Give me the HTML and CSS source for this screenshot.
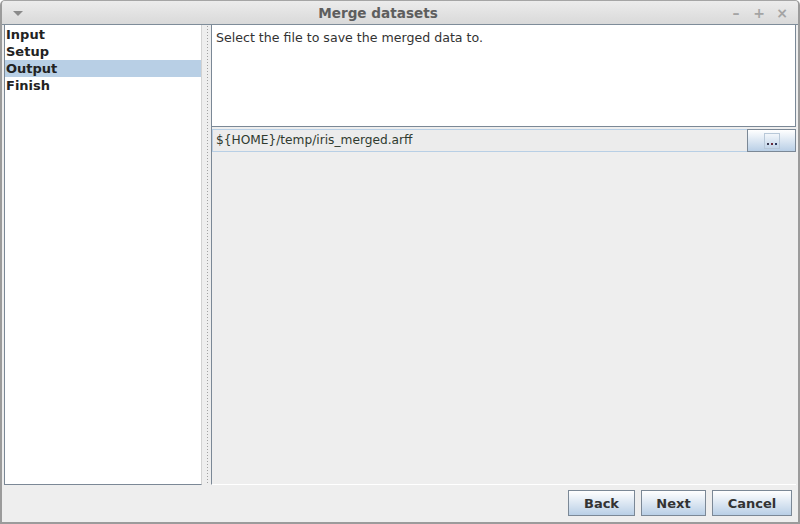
FILE: index.html
```html
<!DOCTYPE html>
<html>
<head>
<meta charset="utf-8">
<link rel="stylesheet" href="styles.css">
</head>
<body>
<div class="window">
  <div class="titlebar">
    <span class="menu-arrow"></span>
    <span class="title">Merge datasets</span>
    <div class="wm-buttons">
      <span class="wm">&#8211;</span>
      <span class="wm">+</span>
      <span class="wm">&#215;</span>
    </div>
  </div>
  <div class="main">
    <ul class="steps">
      <li>Input</li>
      <li>Setup</li>
      <li class="selected">Output</li>
      <li>Finish</li>
    </ul>
    <div class="splitter"><div class="grip"></div></div>
    <div class="panel">
      <div class="info">Select the file to save the merged data to.</div>
      <div class="file-row">
        <div class="file-field">${HOME}/temp/iris_merged.arff</div>
        <button class="browse"><span class="dots"><i class="d1"></i><i class="d2"></i><i class="d3"></i></span></button>
      </div>
    </div>
  </div>
  <div class="footer">
    <button class="btn back">Back</button>
    <button class="btn next">Next</button>
    <button class="btn cancel">Cancel</button>
  </div>
</div>
</body>
</html>
```
FILE: styles.css
```css
html, body {
  margin: 0;
  padding: 0;
  background: #ffffff;
}
body {
  font-family: "DejaVu Sans", sans-serif;
  font-size: 13px;
  color: #333333;
}
.window {
  width: 800px;
  height: 524px;
  box-sizing: border-box;
  border: 2px solid #9b9b9b;
  border-top: 1px solid #a5a5a5;
  border-radius: 5px 5px 0 0;
  background: #eeeeee;
  display: flex;
  flex-direction: column;
  overflow: hidden;
}
.titlebar {
  height: 23px;
  flex: none;
  border-bottom: 1px solid #7e8c99;
  background: linear-gradient(#ececec, #d9d9d9);
  display: flex;
  align-items: center;
  position: relative;
}
.menu-arrow {
  width: 0;
  height: 0;
  margin-left: 11px;
  margin-top: 1px;
  border-left: 5px solid transparent;
  border-right: 5px solid transparent;
  border-top: 5px solid #8a8a8a;
}
.title {
  flex: 1;
  text-align: center;
  font-weight: bold;
  font-size: 13.6px;
  color: #5e5e5e;
  padding-left: 4px;
  margin-top: 1px;
}
.wm-buttons {
  display: flex;
  gap: 9px;
  margin-right: 9px;
  margin-top: 1px;
}
.wm {
  width: 14px;
  text-align: center;
  font-weight: bold;
  font-size: 14px;
  color: #a4a4a4;
}
.main {
  height: 460px;
  flex: none;
  display: flex;
  padding-left: 2px;
}
.steps {
  list-style: none;
  margin: 0;
  padding: 1px 0 0 0;
  width: 196px;
  flex: none;
  background: #ffffff;
  border-left: 1px solid #7b8896;
  border-bottom: 1px solid #7b8896;
  border-right: 1px solid #d2d2d2;
}
.steps li {
  height: 17px;
  line-height: 17px;
  padding-left: 1px;
  font-weight: bold;
  color: #222222;
}
.steps li.selected {
  background: #b8cfe5;
}
.splitter {
  width: 9px;
  flex: none;
  display: flex;
  justify-content: center;
}
.grip {
  width: 3px;
  margin-left: 1px;
  background-image: radial-gradient(circle, #a0a0a0 0.7px, transparent 0.8px);
  background-size: 3px 3px;
  background-repeat: repeat-y;
}
.panel {
  flex: 1;
  display: flex;
  flex-direction: column;
  border-left: 1px solid #7b8896;
  border-bottom: 1px solid #ffffff;
  margin-right: 2px;
}
.info {
  flex: none;
  background: #ffffff;
  border-bottom: 1px solid #7b8896;
  border-right: 1px solid #7b8896;
  padding: 5px 0 0 4px;
  box-sizing: border-box;
  height: 102px;
  font-size: 12.6px;
  color: #333333;
}
.file-row {
  display: flex;
  height: 23px;
  margin-top: 2px;
}
.file-field {
  flex: 1;
  border: 1px solid #b8cfe5;
  border-right: none;
  background: #ececec;
  line-height: 21px;
  padding-left: 3px;
  font-size: 12.2px;
  color: #2f3a2f;
}
.browse {
  width: 49px;
  height: 23px;
  margin: 0;
  padding: 0;
  border: 1px solid #7b8896;
  background: linear-gradient(#ffffff, #b9cfe6);
  display: flex;
  align-items: center;
  justify-content: center;
}
.dots {
  width: 16px;
  height: 16px;
  border: 1px solid #b8c8d8;
  display: flex;
  align-items: flex-end;
  justify-content: center;
  gap: 2px;
  padding-bottom: 3px;
  box-sizing: border-box;
}
.dots i {
  width: 2px;
  height: 2px;
  display: block;
}
.d1 { background: #3a3a50; }
.d2 { background: #6a2a3a; }
.d3 { background: #2a3a60; }
.footer {
  flex: 1;
  display: flex;
  justify-content: flex-end;
  align-items: flex-start;
  gap: 6px;
  padding-top: 5px;
  padding-right: 6px;
}
.btn {
  height: 26px;
  margin: 0;
  padding: 0;
  border: 1px solid #7b8896;
  background: linear-gradient(#ffffff, #b9cfe6);
  font-family: "DejaVu Sans", sans-serif;
  font-weight: bold;
  font-size: 13px;
  color: #333333;
}
.back { width: 67px; }
.next { width: 65px; }
.cancel { width: 80px; }
```
